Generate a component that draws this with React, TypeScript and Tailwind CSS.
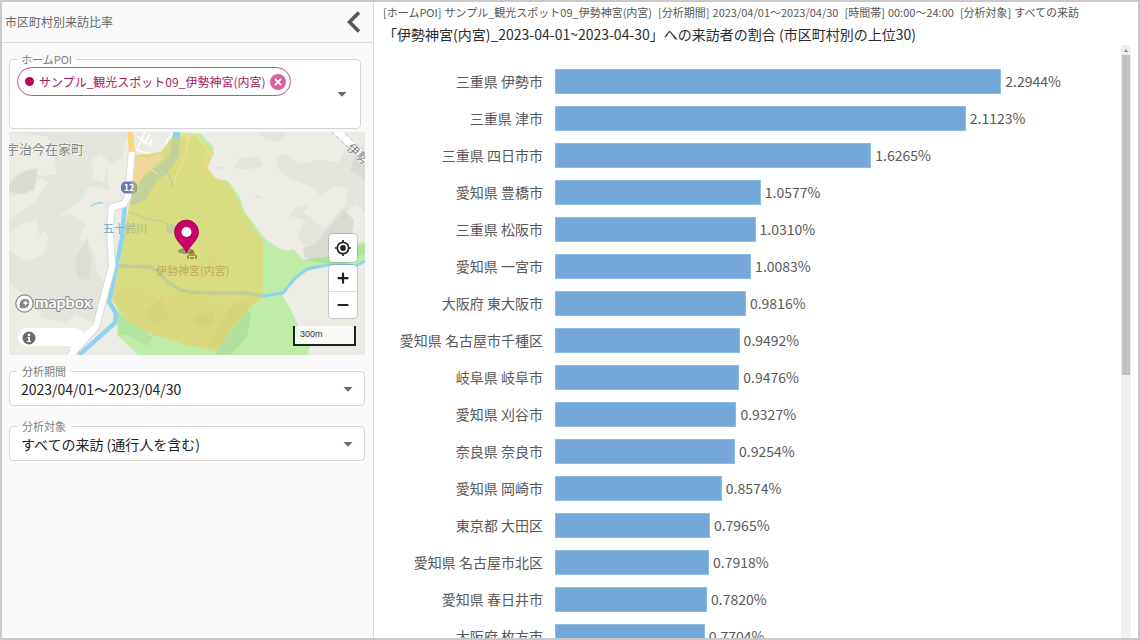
import { useState } from "react";

type Share = { area: string; value: number };

const SHARES: Share[] = [
  { area: "三重県 伊勢市", value: 2.2944 },
  { area: "三重県 津市", value: 2.1123 },
  { area: "三重県 四日市市", value: 1.6265 },
  { area: "愛知県 豊橋市", value: 1.0577 },
  { area: "三重県 松阪市", value: 1.031 },
  { area: "愛知県 一宮市", value: 1.0083 },
  { area: "大阪府 東大阪市", value: 0.9816 },
  { area: "愛知県 名古屋市千種区", value: 0.9492 },
  { area: "岐阜県 岐阜市", value: 0.9476 },
  { area: "愛知県 刈谷市", value: 0.9327 },
  { area: "奈良県 奈良市", value: 0.9254 },
  { area: "愛知県 岡崎市", value: 0.8574 },
  { area: "東京都 大田区", value: 0.7965 },
  { area: "愛知県 名古屋市北区", value: 0.7918 },
  { area: "愛知県 春日井市", value: 0.782 },
  { area: "大阪府 枚方市", value: 0.7704 },
];

// Value that would fill the whole track
const AXIS_MAX = 2.91;

const CONDITIONS = [
  ["[ホームPOI]", "サンプル_観光スポット09_伊勢神宮(内宮)"],
  ["[分析期間]", "2023/04/01〜2023/04/30"],
  ["[時間帯]", "00:00〜24:00"],
  ["[分析対象]", "すべての来訪"],
];

function Caret() {
  return (
    <svg viewBox="0 0 10 5" className="h-[5px] w-[10px]" aria-hidden="true">
      <path d="M0.5 0H9.5L5 4.8Z" fill="#6b6b6b" />
    </svg>
  );
}

function SelectField({ id, label, value }: { id: string; label: string; value: string }) {
  return (
    <fieldset className="rounded-[4px] border border-[#d6d6d6] bg-white px-[7px]">
      <legend className="px-[5px] text-[11px] leading-[12px] text-[#7d7d7d]">
        <label htmlFor={id}>{label}</label>
      </legend>
      <div className="flex h-[28px] items-center pb-[4px]">
        <select
          id={id}
          className="h-[24px] w-full appearance-none bg-transparent pl-[4px] text-[14px] text-[#222] outline-none"
        >
          <option>{value}</option>
        </select>
        <span className="pointer-events-none flex pr-[4px]">
          <Caret />
        </span>
      </div>
    </fieldset>
  );
}

function MapCanvas() {
  return (
    <svg
      viewBox="0 0 356 223"
      preserveAspectRatio="xMidYMid slice"
      className="block h-full w-full"
      role="img"
      aria-label="伊勢神宮(内宮)周辺の地図"
    >
      <rect width="356" height="223" fill="#ecece4" />
      <g fill="#e3e4dc">
        <path d="M0 0H118L113 26L103 32L92 22L82 28L98 34L100 58L80 54L70 70L50 84L30 104L28 88L12 92L0 100V88L26 70L40 50L32 46L18 62L0 64V48L12 40L24 36L30 44L48 42L44 20L38 4Z" />
        <path d="M28 88L62 82L76 92L70 106L84 118L88 140L94 148L92 170L84 190L66 182L58 190L34 186L22 170L0 150V118L18 130L34 122L40 104Z" />
        <path d="M66 128L78 106L82 128L80 148L68 146Z" fill="#dbdcd3" />
        <path d="M0 53L14 40L29 36L25 58L11 62L0 59Z" fill="#dadad2" />
        <path d="M83 32L89 26L98 35L94 51L84 46Z" fill="#ecece4" />
        <path d="M249 0L258 9L270 9L278 0Z" />
        <path d="M230 26L250 25L254 34L238 38L225 36Z" />
        <path d="M208 35H216V38H208ZM246 63H252V67H246Z" />
        <path d="M266 24L278 22L290 32L310 28L330 30L336 18L356 12V80L346 72L330 88L322 110L300 118L288 104L296 88L280 84L286 76L300 72L310 64L304 56L280 46L270 38Z" />
        <path d="M300 72L326 54L339 56L337 72L316 96L302 86L294 80Z" fill="#ecece4" />
        <path d="M316 100L335 78L345 88L342 110L310 128L296 126L294 116L306 112Z" fill="#dadad2" />
        <path d="M341 38L346 24L356 18V48Z" fill="#dadad2" />
      </g>
      <path
        d="M166 0L192 2L205 15L198 36L206 46L219 49L230 64L236 80L256 107L266 114L278 119L284 117L294 128L321 124L356 109V131L318 134L298 139L286 148L273 163L280 174L289 193L301 214L299 223H129L108 203L109 178Z"
        fill="#bfeda8"
      />
      <g fill="#addf9b">
        <path d="M108 180L124 190L144 206L138 214L130 210L120 204L110 202Z" opacity="0.6" />
        <path d="M227 183L238 177L242 184L238 204L222 223H206L214 206Z" opacity="0.8" />
        <path d="M294 128L321 124L356 112V122L320 132Z" opacity="0.8" />
      </g>
      <path d="M139 0H164L156 16L146 25L133 21L129 4Z" fill="#ecece4" />
      <g fill="none" stroke="#fff" strokeWidth="1.6">
        <path d="M129 4L136 10L141 2" />
        <path d="M136 0L128 18L148 24L156 20L158 8L164 1" />
        <path d="M134 10L140 12M143 6L141 14" />
      </g>
      <path
        d="M163 5L177 4L187 4L202 18L205 21L198 36L206 46L218 50L228 66L234 80L254 109V165L238 178L207 219L174 212L144 203L121 191L108 176L103 168L111 128L116 98L121 68L126 23L138 22L152 20Z"
        fill="#d9dd81"
      />
      <g fill="#dcd37b" opacity="0.35">
        <path d="M104 166L126 152L150 165L178 158L204 171L254 165L238 178L207 219L174 212L130 197Z" />
        <path d="M196 118L210 110L220 123L204 132Z" />
      </g>
      <g fill="#d1cb74" opacity="0.35">
        <path d="M220 176L232 170L242 174L229 186L210 213L200 215Z" />
        <path d="M140 176L152 168L160 184L148 194L138 186ZM184 186L204 178L206 192L190 196Z" />
      </g>
      <path d="M126 23L138 26L150 22L154 26L136 42L123 60Z" fill="#eed99a" />
      <path d="M197 18L205 19L198 36L206 46L214 50L204 46L194 35Z" fill="#e8da8b" />
      <path
        d="M164 5H171L170 24L158 42L148 48L136 68L122 74L121 66L134 46L148 34L160 24Z"
        fill="#c3d19c"
      />
      <g fill="none" stroke="#f1dd90" strokeWidth="1.5">
        <path d="M179 3L178 20L165 50" />
        <path d="M188 4L201 22M139 36L149 42M175 1L180 8L184 1" />
      </g>
      <g fill="none" stroke="#c2cd97">
        <path d="M120 80L142 88L154 89L168 100" strokeWidth="1.2" />
        <path d="M156 36L163 50V56" strokeWidth="1.2" />
        <path d="M110 134L141 135L150 140L158 150L171 158L181 160L204 161L238 161L254 164" strokeWidth="3.4" />
      </g>
      <circle cx="162" cy="97" r="5" fill="#c2cd97" />
      <g fill="none" stroke="#8fd3f0">
        <path d="M70 223L106 191L107 181L100 170L108 131L113 106L116 72" strokeWidth="4.5" />
        <path d="M254 164L274 161L286 146L298 137L318 133L334 132L346 134L356 129" strokeWidth="3" />
        <path d="M82 74Q88 70 94 71" strokeWidth="1.4" />
      </g>
      <path d="M164 0H171V6H163Z" fill="#8fd3f0" />
      <path
        d="M123 18L119 64L115 72L103 75L101 96L103 134L87 195L60 225"
        fill="none"
        stroke="#d9dad8"
        strokeWidth="8"
        strokeLinejoin="round"
      />
      <path
        d="M123 18L119 64L115 72L103 75L101 96L103 134L87 195L60 225"
        fill="none"
        stroke="#fff"
        strokeWidth="6"
        strokeLinejoin="round"
      />
      <path d="M121 0L123 20" stroke="#f5d97f" strokeWidth="6" />
      <path d="M87 193L68 208L62 218" fill="none" stroke="#fff" strokeWidth="3" />
      <path d="M326 -3L359 28" stroke="#fff" strokeWidth="7" />
      <path d="M322 -1L355 31M331 -3L360 24" stroke="#a9b0bd" strokeWidth="0.8" strokeDasharray="4 3" />

      <rect x="112" y="49.500" width="16" height="12" rx="5" fill="#6777b8" />
      <path d="M122 49.500H124Q128 50 128 55.500Q128 61 124 61.500H122Z" fill="#a5a183" />
      <text x="120" y="59" textAnchor="middle" fontSize="9" fontWeight="700" fill="#fff">
        12
      </text>
      <g stroke="#fff" strokeOpacity="0.6" strokeWidth="1.5" paintOrder="stroke">
        <text x="75" y="22" textAnchor="end" fontSize="13" fill="#858585">
          宇治今在家町
        </text>
        <text x="337" y="17" fontSize="12" fill="#8a8378" transform="rotate(42 337 17)">
          伊勢
        </text>
      </g>
      <text x="94" y="101" fontSize="11" fill="#6ba6c4">
        五十
        <tspan fill="#a9b78b">鈴川</tspan>
      </text>
      <text x="147" y="143" fontSize="11" fill="#c2a75f">
        伊勢神宮(内宮)
      </text>
      <path d="M178 127V123H180V121L183 118L186 121V123H188V127H186V124H180V127ZM181 125H185V127H181Z" fill="#a99250" />
      <ellipse cx="177" cy="119" rx="8" ry="3" fill="#4c4a20" opacity="0.45" />
      <path
        d="M177.500 120.500C174 113 165.500 108.500 165.500 100A12 12 0 0 1 189.500 100C189.500 108.500 181 113 177.500 120.500Z"
        fill="#c8006c"
        stroke="#8f0b50"
        strokeWidth="0.8"
      />
      <circle cx="177.500" cy="100" r="5" fill="#fff" />

      <g transform="translate(15.500 171.500)">
        <circle r="8.700" fill="#fff" stroke="#8a8a8a" strokeWidth="1.3" />
        <path d="M-4.500 4.500C-5.500 -1 -3.500 -4.800 1 -4.800A4.300 4.300 0 0 1 4.800 0C4.500 4 0 5.500 -4.500 4.500Z" fill="#858585" />
        <path d="M1 -3.500L1.900 -1.400L4 -0.500L1.900 0.400L1 2.500L0.100 0.400L-2 -0.500L0.100 -1.400Z" fill="#fff" />
      </g>
      <text
        x="26"
        y="176"
        fontSize="16"
        fontWeight="700"
        fill="#fff"
        stroke="#8a8a8a"
        strokeWidth="2"
        strokeLinejoin="round"
        paintOrder="stroke"
        className="font-['Lato',sans-serif]"
      >
        mapbox
      </text>
    </svg>
  );
}

function MapPanel() {
  return (
    <div className="relative h-[223px] overflow-hidden">
      <MapCanvas />
      <div className="absolute bottom-[9px] left-[9px] flex h-[18px] w-[66px] items-center rounded-full bg-white pl-[4px]">
        <button type="button" aria-label="地図の帰属情報" className="pt-[2px]">
          <svg viewBox="0 0 14 14" className="block h-[14px] w-[14px]" aria-hidden="true">
            <circle cx="7" cy="7" r="6.500" fill="#6c6c6c" />
            <path d="M5.300 6H8V10H9V11H5.200V10H6.200V7H5.300Z" fill="#fff" />
            <circle cx="7" cy="4" r="1.300" fill="#fff" />
          </svg>
        </button>
      </div>
      <div className="absolute right-[8px] bottom-[37px] flex flex-col gap-[3px]">
        <button
          type="button"
          aria-label="現在地"
          className="flex h-[28px] w-[28px] items-center justify-center rounded-[4px] bg-white shadow-[0_0_0_1px_rgba(0,0,0,0.15)]"
        >
          <svg viewBox="0 0 18 18" className="h-[18px] w-[18px]" aria-hidden="true">
            <circle cx="9" cy="9" r="5.700" fill="none" stroke="#222" strokeWidth="1.700" />
            <circle cx="9" cy="9" r="2.900" fill="#222" />
            <path d="M9 1V4M9 14V17M1 9H4M14 9H17" stroke="#222" strokeWidth="1.700" />
          </svg>
        </button>
        <div className="flex flex-col divide-y divide-[#ddd] rounded-[4px] bg-white shadow-[0_0_0_1px_rgba(0,0,0,0.15)]">
          <button type="button" aria-label="拡大" className="flex h-[27px] w-[28px] items-center justify-center">
            <svg viewBox="0 0 12 12" className="h-[12px] w-[12px]" aria-hidden="true">
              <path d="M6 1.700V10.700M1.500 6.200H10.500" stroke="#222" strokeWidth="2.200" strokeLinecap="round" />
            </svg>
          </button>
          <button type="button" aria-label="縮小" className="flex h-[26px] w-[28px] items-center justify-center">
            <svg viewBox="0 0 12 12" className="h-[12px] w-[12px]" aria-hidden="true">
              <path d="M1.500 6H10.500" stroke="#222" strokeWidth="2.200" strokeLinecap="round" />
            </svg>
          </button>
        </div>
      </div>
      <div className="absolute right-[9px] bottom-[9px] flex h-[20px] w-[63px] items-center border-2 border-t-0 border-[#222] bg-white/75 pl-[5px] font-['Liberation_Sans',sans-serif] text-[9px] text-[#333]">
        300m
      </div>
    </div>
  );
}

function Sidebar() {
  const [spots, setSpots] = useState(["サンプル_観光スポット09_伊勢神宮(内宮)"]);
  return (
    <aside className="flex w-[372px] shrink-0 flex-col border-r border-[#dcdcdc] bg-[#fafafa]">
      <header className="flex h-[41px] shrink-0 items-center justify-between border-b border-[#dcdcdc] pr-[12px] pl-[3px]">
        <h1 className="text-[12px] text-[#666]">市区町村別来訪比率</h1>
        <button type="button" aria-label="パネルを閉じる">
          <svg viewBox="0 0 14 22" className="block h-[22px] w-[14px]" aria-hidden="true">
            <path d="M12 1.500L2.500 11L12 20.500" fill="none" stroke="#585858" strokeWidth="3.600" />
          </svg>
        </button>
      </header>
      <div className="flex flex-col pt-[10px] pr-[8px] pl-[7px]">
        <fieldset className="mr-[4px] rounded-[4px] border border-[#d6d6d6] bg-white px-[7px]">
          <legend className="px-[4px] text-[11px] leading-[12px] text-[#7d7d7d]">ホームPOI</legend>
          <div className="flex h-[63px] items-start justify-between pt-[2px]">
            <div>
              {spots.map((spot) => (
                <span
                  key={spot}
                  className="flex h-[29px] items-center rounded-full border border-[#b8528a] pr-[4px] pl-[7px] text-[12px] text-[#a8185f]"
                >
                  <span className="mr-[5px] h-[9px] w-[9px] rounded-full bg-[#c4005f]" />
                  {spot}
                  <button
                    type="button"
                    aria-label={`${spot}を削除`}
                    className="ml-[4px]"
                    onClick={() => setSpots(spots.filter((s) => s !== spot))}
                  >
                    <svg viewBox="0 0 16 16" className="block h-[16px] w-[16px]" aria-hidden="true">
                      <circle cx="8" cy="8" r="8" fill="#d9619f" />
                      <path d="M4.900 4.900L11.100 11.100M11.100 4.900L4.900 11.100" stroke="#fff" strokeWidth="1.800" />
                    </svg>
                  </button>
                </span>
              ))}
            </div>
            <button
              type="button"
              aria-label="ホームPOIを選択"
              className="flex h-[54px] items-center pr-[6px]"
            >
              <Caret />
            </button>
          </div>
        </fieldset>
        <div className="mt-[3px]">
          <MapPanel />
        </div>
        <div className="mt-[10px] flex flex-col gap-[14px]">
          <SelectField id="period" label="分析期間" value="2023/04/01〜2023/04/30" />
          <SelectField id="target" label="分析対象" value="すべての来訪 (通行人を含む)" />
        </div>
      </div>
    </aside>
  );
}

function ShareRow({ area, value }: Share) {
  return (
    <li className="flex h-[37px] items-center text-[14px] text-[#595959]">
      <span className="w-[169px] shrink-0 text-right whitespace-nowrap">{area}</span>
      <div className="ml-[12px] flex flex-1 items-center">
        <div
          className="h-[25px] shrink-0 border border-[#8dbbe3] bg-[#73a8d9]"
          style={{ width: `${(value / AXIS_MAX) * 100}%` }}
        />
        <span className="ml-[4px]">{value.toFixed(4)}%</span>
      </div>
    </li>
  );
}

export default function App() {
  return (
    <div className="flex h-screen overflow-hidden border-2 border-[#c9c9c9] bg-white font-['Noto_Sans_CJK_JP',sans-serif]">
      <Sidebar />
      <main className="flex min-w-0 flex-1 flex-col">
        <div className="flex h-[20px] shrink-0 items-center gap-[6px] pl-[9px] text-[11px] whitespace-nowrap text-[#555]">
          {CONDITIONS.map(([name, value]) => (
            <span key={name} className="flex gap-[3px]">
              <span>{name}</span>
              <span>{value}</span>
            </span>
          ))}
        </div>
        <h2 className="h-[23px] shrink-0 pl-[9px] text-[14px] leading-[25px] whitespace-nowrap text-[#2b2b2b]">
          「伊勢神宮(内宮)_2023-04-01~2023-04-30」への来訪者の割合 (市区町村別の上位30)
        </h2>
        <div className="flex min-h-0 flex-1 pr-[7px]">
          <ol className="min-w-0 flex-1 overflow-y-auto pt-[18px] [scrollbar-width:none]">
            {SHARES.map((share) => (
              <ShareRow key={share.area} {...share} />
            ))}
          </ol>
          <div className="flex w-[10px] flex-col items-center bg-[#f0f0f0]" aria-hidden="true">
            <div className="flex h-[10px] items-center">
              <svg viewBox="0 0 4 3" className="h-[3px] w-[4px]">
                <path d="M0 3L2 0L4 3Z" fill="#8a8a8a" />
              </svg>
            </div>
            <div className="h-[54%] w-[8px] bg-[#c1c1c1]" />
          </div>
        </div>
      </main>
    </div>
  );
}
